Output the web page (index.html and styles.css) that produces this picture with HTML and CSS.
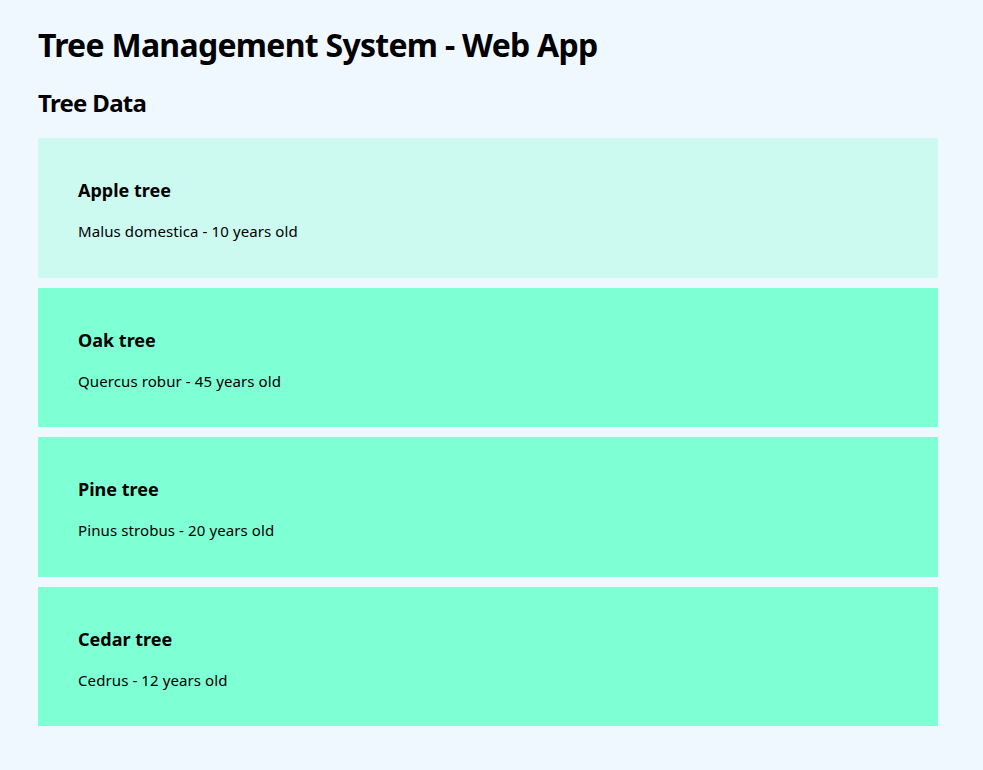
FILE: index.html
```html
<!DOCTYPE html>
<html lang="en">
<head>
<meta charset="utf-8">
<title>Tree Management System - Web App</title>
<link rel="stylesheet" href="styles.css">
</head>
<body>
<main class="app">
  <h1 class="title">Tree Management System - Web App</h1>
  <h2 class="subtitle">Tree Data</h2>
  <ul class="tree-list">
    <li class="tree-card tree-card--active">
      <h3 class="tree-name">Apple tree</h3>
      <p class="tree-desc">Malus domestica - 10 years old</p>
    </li>
    <li class="tree-card">
      <h3 class="tree-name">Oak tree</h3>
      <p class="tree-desc">Quercus robur - 45 years old</p>
    </li>
    <li class="tree-card">
      <h3 class="tree-name">Pine tree</h3>
      <p class="tree-desc">Pinus strobus - 20 years old</p>
    </li>
    <li class="tree-card">
      <h3 class="tree-name">Cedar tree</h3>
      <p class="tree-desc">Cedrus - 12 years old</p>
    </li>
  </ul>
</main>
</body>
</html>
```
FILE: styles.css
```css
html {
  background: #f0f8ff;
}
body {
  margin: 0;
  padding: 0 45px 0 38px;
  font-family: "Noto Sans", "Open Sans", sans-serif;
  color: #000;
}
.app {
  padding-top: 1px;
}
.title {
  font-size: 32px;
  line-height: 42px;
  font-weight: 700;
  letter-spacing: -0.72px;
  margin: 23px 0 21px;
}
.subtitle {
  font-size: 24px;
  line-height: 32px;
  font-weight: 700;
  letter-spacing: -0.7px;
  margin: 0 0 19px;
}
.tree-list {
  list-style: none;
  margin: 0;
  padding: 0;
  display: flex;
  flex-direction: column;
  gap: 10px;
}
.tree-card {
  background: #7fffd4;
  padding: 20px 40px;
  height: 139.6px;
  box-sizing: border-box;
}
.tree-card--active {
  background: #ccfaf0;
}
.tree-name {
  font-size: 18px;
  line-height: 25px;
  font-weight: 700;
  margin: 20px 0 18px;
}
.tree-desc {
  font-size: 15px;
  line-height: 21px;
  letter-spacing: 0.1px;
  margin: 0;
}
```
